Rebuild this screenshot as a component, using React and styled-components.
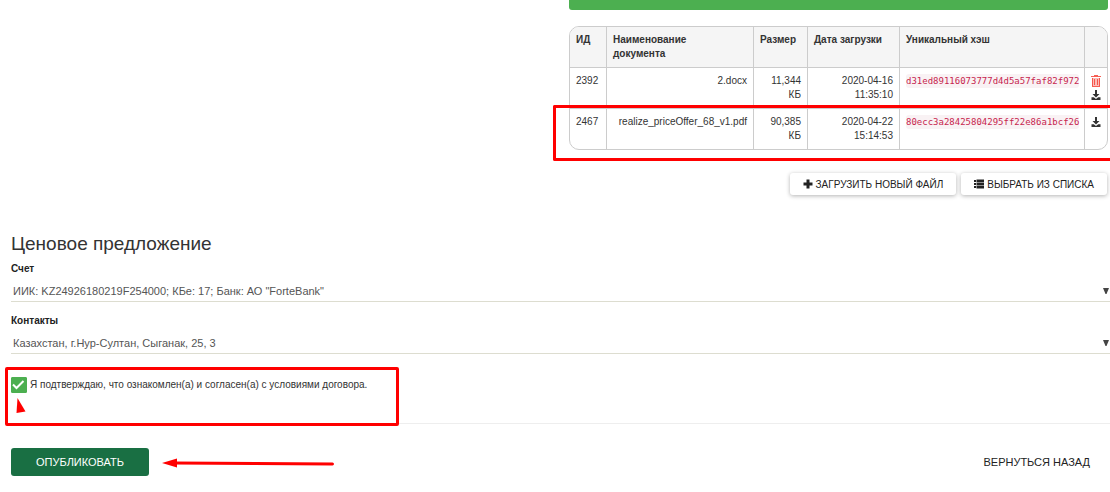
import React, { useState } from "react";
import styled, { createGlobalStyle } from "styled-components";

const GlobalStyle = createGlobalStyle`
  * {
    box-sizing: border-box;
  }

  body {
    margin: 0;
    background-color: #fff;
    color: #333;
    font-family: "Liberation Sans", Arial, sans-serif;
    font-size: 10px;
    line-height: 14px;
  }
`;

const Page = styled.main`
  padding-left: 11px;
  overflow-x: hidden;
`;

const Columns = styled.div`
  display: grid;
  grid-template-columns: 1fr 1fr;
  column-gap: 19px;
  margin-right: 2px;
`;

const Documents = styled.section`
  grid-column: 2;
`;

const StatusBar = styled.div`
  height: 10px;
  margin-bottom: 16px;
  border-radius: 0 0 3px 3px;
  background-color: #4caf50;
`;

const TableWrapper = styled.div`
  position: relative;
`;

const Table = styled.table`
  width: 100%;
  table-layout: fixed;
  border: 1px solid #ccc;
  border-radius: 10px;
  border-spacing: 0;
  overflow: hidden;
`;

const HeadCell = styled.th`
  width: ${(props) => props.$width || "auto"};
  height: 40px;
  padding: 6px;
  border-left: 1px solid #ccc;
  background-color: #f5f5f5;
  text-align: left;
  vertical-align: top;

  &:first-child {
    border-left: none;
  }
`;

const Cell = styled.td`
  height: 41px;
  padding: 6px;
  border-top: 1px solid #ccc;
  border-left: 1px solid #ccc;
  text-align: ${(props) => props.$align || "left"};
  vertical-align: top;

  &:first-child {
    border-left: none;
  }
`;

const Hash = styled.code`
  display: inline-block;
  border-radius: 3px;
  background-color: #f9f2f4;
  color: #c7254e;
  font-family: "DejaVu Sans Mono", monospace;
  font-size: 9px;
`;

const IconButton = styled.button`
  display: block;
  height: 14px;
  padding: 0;
  border: none;
  background: none;
  color: ${(props) => (props.$danger ? "#f44336" : "#333")};
  cursor: pointer;

  svg {
    display: block;
  }
`;

const Actions = styled.div`
  display: flex;
  justify-content: flex-end;
  gap: 5px;
  margin: 23px 1px 0 0;
`;

const ActionButton = styled.button`
  display: flex;
  align-items: center;
  gap: 3px;
  height: 22px;
  padding: 0 13px;
  border: none;
  border-radius: 3px;
  background-color: #fff;
  box-shadow: 0 1px 4px rgba(0, 0, 0, 0.3);
  color: #222;
  font-family: inherit;
  font-size: 10px;
  white-space: nowrap;
  cursor: pointer;
`;

const Title = styled.h2`
  margin: 37px 0 6px;
  font-size: 19px;
  font-weight: normal;
  line-height: 24px;
`;

const Field = styled.div`
  margin-bottom: 12px;
`;

const Label = styled.label`
  display: block;
  margin-bottom: 2px;
  color: #222;
  font-weight: bold;
`;

const SelectWrapper = styled.div`
  position: relative;
`;

const Select = styled.select`
  display: block;
  width: 100%;
  height: 24px;
  padding: 2px 20px 0 2px;
  border: none;
  border-bottom: 1px solid #ddddd0;
  border-radius: 0;
  appearance: none;
  background: none;
  color: #555;
  font-family: inherit;
  font-size: 11px;
`;

const Caret = styled.svg`
  position: absolute;
  top: 10px;
  right: 1px;
  pointer-events: none;
`;

const Confirm = styled.div`
  position: relative;
  display: flex;
  align-items: center;
  gap: 3px;
  margin-top: 23px;
  padding-bottom: 30px;
  border-bottom: 1px solid #eee;
`;

const CheckBox = styled.span`
  position: relative;
  display: flex;
  width: 16px;
  height: 16px;

  svg {
    position: absolute;
    inset: 0;
    pointer-events: none;
  }
`;

const CheckInput = styled.input`
  width: 16px;
  height: 16px;
  margin: 0;
  border: 1px solid #4caf50;
  border-radius: 1px;
  appearance: none;

  &:checked {
    background-color: #4caf50;
  }
`;

const Footer = styled.div`
  display: flex;
  align-items: center;
  justify-content: space-between;
  padding: 24px 20px 16px 0;
`;

const PublishGroup = styled.div`
  display: flex;
  align-items: center;
  gap: 13px;
`;

const PublishButton = styled.button`
  width: 138px;
  height: 28px;
  border: none;
  border-radius: 3px;
  background-color: #196f43;
  color: #fff;
  font-family: inherit;
  font-size: 11px;
  cursor: pointer;
`;

const BackLink = styled.a`
  color: #222;
  font-size: 11px;
  text-decoration: none;
`;

const RowHighlight = styled.div`
  position: absolute;
  right: -2px;
  bottom: -11px;
  left: -16px;
  height: 56px;
  border: 3px solid #f00;
  border-right: none;
  border-radius: 2px 0 0 2px;
  pointer-events: none;
`;

const ConfirmHighlight = styled.div`
  position: absolute;
  top: -10px;
  left: -6px;
  width: 394px;
  height: 59px;
  border: 3px solid #f00;
  border-radius: 2px;
  pointer-events: none;

  svg {
    position: absolute;
    top: 28px;
    left: 8px;
  }
`;

const documents = [
  {
    id: 2392,
    name: "2.docx",
    size: "11,344 КБ",
    date: "2020-04-16 11:35:10",
    hash: "d31ed89116073777d4d5a57faf82f972",
    removable: true,
  },
  {
    id: 2467,
    name: "realize_priceOffer_68_v1.pdf",
    size: "90,385 КБ",
    date: "2020-04-22 15:14:53",
    hash: "80ecc3a28425804295ff22e86a1bcf26",
  },
];

const TrashIcon = () => (
  <svg width="10" height="12" viewBox="0 0 10 12">
    <path fill="currentColor" fillOpacity="0.35" d="M1 3h8v8H1z" />
    <path
      fill="currentColor"
      fillOpacity="0.85"
      d="M3 0h4v1h3v1H0V1h3zM1 3h1v8H1zM8 3h1v8H8zM1 11h8v1H1zM3 4h1v6H3zM6 4h1v6H6z"
    />
  </svg>
);

const DownloadIcon = () => (
  <svg width="10" height="12" viewBox="0 0 10 12">
    <path
      fill="currentColor"
      d="M4 1h2v4h2.500L5 8.500 1.500 5H4zM.5 8.200h2.300L5 10l2.200-1.800h2.300V11h-9z"
    />
  </svg>
);

const PlusIcon = () => (
  <svg width="10" height="10" viewBox="0 0 10 10">
    <path fill="currentColor" d="M3.500 .5h3v3h3v3h-3v3h-3v-3h-3v-3h3z" />
  </svg>
);

const ListIcon = () => (
  <svg width="10" height="10" viewBox="0 0 10 10">
    <path
      fill="currentColor"
      d="M0 1h2v2H0zM2.500 .5H10v2.700H2.500zM0 4h2v2H0zM2.500 3.700H10v2.700H2.500zM0 7h2v2H0zM2.500 6.900H10v2.700H2.500z"
    />
  </svg>
);

const SelectField = ({ id, label, value }) => (
  <Field>
    <Label htmlFor={id}>{label}</Label>
    <SelectWrapper>
      <Select id={id} defaultValue={value}>
        <option value={value}>{value}</option>
      </Select>
      <Caret width="6" height="6" viewBox="0 0 6 6">
        <path fill="#444" d="M0 0h6L3.500 6h-1z" />
      </Caret>
    </SelectWrapper>
  </Field>
);

const App = () => {
  const [confirmed, setConfirmed] = useState(true);

  return (
    <Page>
      <GlobalStyle />
      <Columns>
        <Documents>
          <StatusBar />
          <TableWrapper>
            <Table>
              <thead>
                <tr>
                  <HeadCell $width="36px">ИД</HeadCell>
                  <HeadCell>
                    Наименование
                    <br />
                    документа
                  </HeadCell>
                  <HeadCell $width="54px">Размер</HeadCell>
                  <HeadCell $width="92px">Дата загрузки</HeadCell>
                  <HeadCell $width="185px">Уникальный хэш</HeadCell>
                  <HeadCell $width="23px" />
                </tr>
              </thead>
              <tbody>
                {documents.map((doc) => (
                  <tr key={doc.id}>
                    <Cell>{doc.id}</Cell>
                    <Cell $align="right">{doc.name}</Cell>
                    <Cell $align="right">{doc.size}</Cell>
                    <Cell $align="right">{doc.date}</Cell>
                    <Cell>
                      <Hash>{doc.hash}</Hash>
                    </Cell>
                    <Cell>
                      {doc.removable && (
                        <IconButton $danger aria-label="Удалить">
                          <TrashIcon />
                        </IconButton>
                      )}
                      <IconButton aria-label="Скачать">
                        <DownloadIcon />
                      </IconButton>
                    </Cell>
                  </tr>
                ))}
              </tbody>
            </Table>
            <RowHighlight />
          </TableWrapper>
          <Actions>
            <ActionButton>
              <PlusIcon />
              ЗАГРУЗИТЬ НОВЫЙ ФАЙЛ
            </ActionButton>
            <ActionButton>
              <ListIcon />
              ВЫБРАТЬ ИЗ СПИСКА
            </ActionButton>
          </Actions>
        </Documents>
      </Columns>

      <Title>Ценовое предложение</Title>
      <SelectField
        id="account"
        label="Счет"
        value={'ИИК: KZ24926180219F254000; КБе: 17; Банк: АО "ForteBank"'}
      />
      <SelectField
        id="contacts"
        label="Контакты"
        value="Казахстан, г.Нур-Султан, Сыганак, 25, 3"
      />

      <Confirm>
        <CheckBox>
          <CheckInput
            id="confirm"
            type="checkbox"
            checked={confirmed}
            onChange={(e) => setConfirmed(e.target.checked)}
          />
          {confirmed && (
            <svg width="16" height="16" viewBox="0 0 16 16">
              <path
                d="M2 7.500L5.500 11 12.500 4"
                fill="none"
                stroke="#fff"
                strokeWidth="2"
              />
            </svg>
          )}
        </CheckBox>
        <label htmlFor="confirm">
          Я подтверждаю, что ознакомлен(а) и согласен(а) с условиями договора.
        </label>
        <ConfirmHighlight>
          <svg width="10" height="16" viewBox="0 0 10 16">
            <path fill="#f00" d="M1.500 0L9.500 13.500 .5 15z" />
          </svg>
        </ConfirmHighlight>
      </Confirm>

      <Footer>
        <PublishGroup>
          <PublishButton>ОПУБЛИКОВАТЬ</PublishButton>
          <svg width="173" height="12" viewBox="0 0 173 12">
            <path
              d="M12 7l158.500 1"
              stroke="#f00"
              strokeWidth="3"
              strokeLinecap="round"
            />
            <path fill="#f00" d="M0 7L15 2.500v9z" />
          </svg>
        </PublishGroup>
        <BackLink href="#">ВЕРНУТЬСЯ НАЗАД</BackLink>
      </Footer>
    </Page>
  );
};

export default App;
